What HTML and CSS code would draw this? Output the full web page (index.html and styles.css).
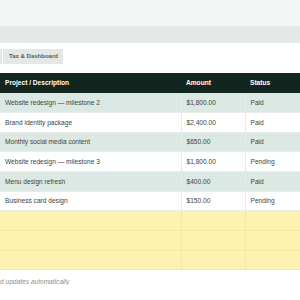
FILE: index.html
```html
<!DOCTYPE html>
<html>
<head>
<meta charset="utf-8">
<link rel="stylesheet" href="styles.css">
</head>
<body>
<div class="topbar"></div>
<div class="band"></div>
<div class="tabs">
  <div class="tab-prev"></div>
  <div class="tab">Tax &amp; Dashboard</div>
</div>
<table class="sheet">
  <colgroup><col class="c1"><col class="c2"><col class="c3"></colgroup>
  <thead>
    <tr><th>Project / Description</th><th>Amount</th><th>Status</th></tr>
  </thead>
  <tbody>
    <tr class="tint"><td>Website redesign — milestone 2</td><td>$1,800.00</td><td>Paid</td></tr>
    <tr><td>Brand identity package</td><td>$2,400.00</td><td>Paid</td></tr>
    <tr class="tint"><td>Monthly social media content</td><td>$650.00</td><td>Paid</td></tr>
    <tr><td>Website redesign — milestone 3</td><td>$1,800.00</td><td>Pending</td></tr>
    <tr class="tint"><td>Menu design refresh</td><td>$400.00</td><td>Paid</td></tr>
    <tr><td>Business card design</td><td>$150.00</td><td>Pending</td></tr>
    <tr class="empty"><td></td><td></td><td></td></tr>
    <tr class="empty"><td></td><td></td><td></td></tr>
    <tr class="empty"><td></td><td></td><td></td></tr>
  </tbody>
</table>
<p class="note">d updates automatically</p>
</body>
</html>
```
FILE: styles.css
```css
html, body {
  margin: 0;
  padding: 0;
  background: #ffffff;
  font-family: "Liberation Sans", Arial, sans-serif;
}
.topbar {
  height: 26px;
  background: #f4f6f5;
}
.band {
  height: 17px;
  background: #e4e9e7;
}
.tabs {
  display: flex;
  gap: 1px;
  margin-top: 6px;
  height: 15px;
}
.tab-prev {
  width: 2px;
  background: #e3e8e6;
}
.tab {
  background: #e3e8e6;
  color: #555c5a;
  font-size: 6px;
  font-weight: bold;
  line-height: 15px;
  padding: 0 5px 0 6px;
}
.sheet {
  margin-top: 9px;
  width: 300px;
  border-collapse: collapse;
  table-layout: fixed;
  font-size: 6.6px;
}
.c1 { width: 181px; }
.c2 { width: 64px; }
.c3 { width: 55px; }
.sheet th, .sheet td {
  height: 19.7px;
  padding: 0 0 0 5px;
  text-align: left;
  box-sizing: border-box;
  white-space: nowrap;
  overflow: hidden;
}
.sheet th {
  background: #13251f;
  color: #ffffff;
  font-weight: bold;
}
.sheet td {
  color: #3d4442;
  border-right: 1px solid #e6ebe9;
  border-bottom: 1px solid #e8ecea;
}
.sheet td:last-child { border-right: none; }
.sheet tr.tint td { background: #dbe8e3; }
.sheet tr.empty td {
  background: #fdf2b0;
  border-right-color: #f3e8a8;
  border-bottom-color: #f3e8a8;
}
.note {
  margin: 8px 0 0 0;
  font-size: 6.6px;
  font-style: italic;
  color: #8a8f8d;
}
```
